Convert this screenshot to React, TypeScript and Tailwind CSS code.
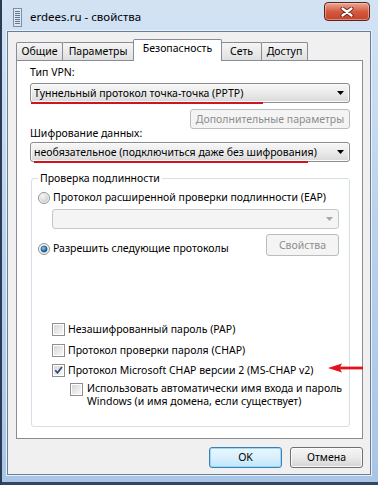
import React from "react";

function DropArrow({ color = "#000" }: { color?: string }) {
  return (
    <svg width="7" height="4" viewBox="0 0 7 4" className="shrink-0">
      <path d="M0 0h7L3.5 4z" fill={color} />
    </svg>
  );
}

function Combo({ text, line }: { text: string; line?: string }) {
  return (
    <div className="relative flex h-[20px] items-center rounded-[3px] border border-[#8a8c90] bg-linear-to-b from-[#f7f7f7] via-[#ebebeb] to-[#d9d9d9] pl-[3px] pr-[5px] shadow-[inset_0_0_0_1px_#fbfbfb]">
      <span className="flex-1 truncate leading-[15px]">{text}</span>
      <DropArrow />
      {line && <div className={`absolute -bottom-[2px] h-[2px] bg-[#d4121c] ${line}`} />}
    </div>
  );
}

function Btn({
  children,
  className,
  disabled,
  primary,
}: {
  children: React.ReactNode;
  className: string;
  disabled?: boolean;
  primary?: boolean;
}) {
  if (disabled) {
    return (
      <div className={`flex items-center justify-center rounded-[3px] border border-[#b9bcc0] bg-[#f4f4f4] leading-[15px] text-[#8d8d8d] ${className}`}>
        {children}
      </div>
    );
  }
  return (
    <div
      className={`flex items-center justify-center rounded-[3px] border bg-linear-to-b leading-[15px] ${
        primary
          ? "border-[#3c7fb1] from-[#eaf6fd] via-[#d9f0fc] to-[#bee6fd] shadow-[inset_0_0_0_1px_#9fd8f7]"
          : "border-[#707070] from-[#f5f5f5] via-[#eaeaea] to-[#d4d4d4] shadow-[inset_0_0_0_1px_#fafafa]"
      } ${className}`}
    >
      {children}
    </div>
  );
}

function Check({ checked }: { checked?: boolean }) {
  return (
    <span className="flex h-[13px] w-[13px] shrink-0 border border-[#8f8f8f] bg-white p-px">
      <span className="flex h-full w-full items-center justify-center bg-linear-to-br from-[#d6d8db] to-[#f8f8f8]">
        {checked && (
          <svg width="9" height="8" viewBox="0 0 9 8">
            <path d="M1.2 4.2l2.3 2.6L7.9 1" stroke="#34497a" strokeWidth="1.7" fill="none" />
          </svg>
        )}
      </span>
    </span>
  );
}

function Radio({ checked }: { checked?: boolean }) {
  return (
    <svg width="12" height="12" viewBox="0 0 12 12" className="shrink-0">
      <defs>
        <radialGradient id="rbg" cx="0.35" cy="0.3" r="0.8">
          <stop offset="0" stopColor="#f6f6f6" />
          <stop offset="1" stopColor="#c9cbcf" />
        </radialGradient>
        <radialGradient id="rdot" cx="0.4" cy="0.35" r="0.7">
          <stop offset="0" stopColor="#8fd3ff" />
          <stop offset="0.6" stopColor="#2a78b8" />
          <stop offset="1" stopColor="#14476f" />
        </radialGradient>
      </defs>
      <circle cx="6" cy="6" r="5.5" fill="#fafafa" stroke="#8e8f8f" />
      <circle cx="6" cy="6" r="4.2" fill="url(#rbg)" />
      {checked && <circle cx="6" cy="6" r="3" fill="url(#rdot)" stroke="#1b4a73" strokeWidth="0.6" />}
    </svg>
  );
}

const tabs = [
  { label: "Общие", w: "w-[47px]" },
  { label: "Параметры", w: "w-[72px]" },
  { label: "Безопасность", w: "w-[89px]", active: true },
  { label: "Сеть", w: "w-[41px]" },
  { label: "Доступ", w: "w-[47px]" },
];

export default function App() {
  return (
    <div className="relative flex h-[485px] w-[378px] flex-col overflow-hidden bg-linear-to-b from-[#d3e3f4] via-[#bad1ec] to-[#a9c5e6] font-['Noto_Sans',sans-serif] text-[10.5px] text-black shadow-[inset_2px_0_0_#2a3b56,inset_0_-3px_0_#34455f]">
      {/* title bar */}
      <div className="flex h-[31px] items-start">
        <svg width="9" height="19" viewBox="0 0 9 19" className="ml-[13px] mt-[8px]">
          <rect x="0.5" y="0.5" width="8" height="18" fill="#dfe6ee" stroke="#7f8ea0" />
          {[3, 5, 7, 9, 11, 13, 15].map((y) => (
            <rect key={y} x="2" y={y} width="5" height="1" fill="#5d7894" />
          ))}
        </svg>
        <span className="ml-[8px] mt-[9px] text-[11.5px] leading-[16px]">erdees.ru - свойства</span>
        <div className="ml-auto mr-[8px] mt-[2px] flex h-[19px] w-[46px] items-center justify-center rounded-[4px] border border-[#5e2419] bg-linear-to-b from-[#e9a796] via-[#d45a40] to-[#c4432a] shadow-[inset_0_0_0_1px_rgba(255,220,210,0.45)]">
          <svg width="14" height="10" viewBox="0 0 14 10">
            <path d="M2.5 1.5l9 7M11.5 1.5l-9 7" stroke="#5a1a10" strokeWidth="4" strokeLinecap="round" />
            <path d="M2.5 1.5l9 7M11.5 1.5l-9 7" stroke="#fff" strokeWidth="2.3" strokeLinecap="round" />
          </svg>
        </div>
      </div>

      {/* body */}
      <div className="ml-[7px] flex h-[444px] w-[364px] flex-col border border-[#6a7e98] bg-[#f0f0f0] pl-[8px] pr-[7px] pt-[7px] shadow-[0_0_0_1px_#e8f0f9]">
        <div className="relative z-10 -mb-px flex h-[22px] items-end">
          {tabs.map((t, i) =>
            t.active ? (
              <div
                key={t.label}
                className={`relative z-10 flex h-[22px] items-center justify-center rounded-t-[2px] border border-b-0 border-[#898c95] bg-white pb-[3px] ${t.w} ${i ? "-ml-px" : ""}`}
              >
                {t.label}
              </div>
            ) : (
              <div
                key={t.label}
                className={`mb-px flex h-[18px] items-center justify-center rounded-t-[2px] border border-b-0 border-[#898c95] bg-linear-to-b from-[#f5f5f5] to-[#e0e0e0] ${t.w} ${i ? "-ml-px" : ""}`}
              >
                {t.label}
              </div>
            )
          )}
        </div>

        <div className="relative flex h-[379px] flex-col border border-[#898c95] bg-white pl-[13px] pr-[12px]">
          <div className="mt-[4px] leading-[15px]">Тип VPN:</div>
          <div className="mt-[3px]">
            <Combo text="Туннельный протокол точка-точка (PPTP)" line="left-0 w-[232px]" />
          </div>
          <Btn disabled className="mt-[6px] h-[20px] w-[160px] self-end">
            Дополнительные параметры
          </Btn>
          <div className="-mt-[3px] leading-[15px]">Шифрование данных:</div>
          <div className="mt-[1px]">
            <Combo text="необязательное (подключиться даже без шифрования)" line="left-[3px] w-[274px]" />
          </div>

          <fieldset className="ml-px mt-[9px] min-w-0 rounded-[3px] border border-[#d5dfe5] pb-[18px] pl-[6px] pr-[10px]">
            <legend className="px-[2px] leading-[15px]">Проверка подлинности</legend>
            <div className="mt-[4px] flex h-[15px] items-center gap-[3px]">
              <Radio />
              <span className="whitespace-nowrap leading-[15px]">Протокол расширенной проверки подлинности (EAP)</span>
            </div>
            <div className="ml-[14px] mt-[4px] flex h-[20px] items-center justify-end rounded-[3px] border border-[#c3c6ca] bg-[#f4f4f4] pr-[5px]">
              <DropArrow color="#a8a8a8" />
            </div>
            <div className="mt-[5px] flex items-start">
              <div className="mt-[7px] flex h-[15px] items-center gap-[3px]">
                <Radio checked />
                <span className="leading-[15px]">Разрешить следующие протоколы</span>
              </div>
              <Btn disabled className="ml-auto h-[22px] w-[73px]">
                Свойства
              </Btn>
            </div>

            <div className="ml-[14px] mt-[63px] flex h-[20px] items-center gap-[3px]">
              <Check />
              <span className="leading-[15px]">Незашифрованный пароль (PAP)</span>
            </div>
            <div className="ml-[14px] mt-px flex h-[20px] items-center gap-[3px]">
              <Check />
              <span className="leading-[15px]">Протокол проверки пароля (CHAP)</span>
            </div>
            <div className="ml-[14px] flex h-[20px] items-center gap-[3px]">
              <Check checked />
              <span className="whitespace-nowrap leading-[15px]">Протокол Microsoft CHAP версии 2 (MS-CHAP v2)</span>
            </div>
            <div className="ml-[32px] mt-[2px] flex items-start gap-[4px]">
              <div className="mt-px">
                <Check />
              </div>
              <span className="whitespace-nowrap leading-[13px]">
                Использовать автоматически имя входа и пароль
                <br />
                Windows (и имя домена, если существует)
              </span>
            </div>
          </fieldset>

          <svg width="35" height="10" viewBox="0 0 35 10" className="absolute left-[311px] top-[302px]">
            <path d="M0 5L14 0.5L11.5 5L14 9.5z" fill="#e3121c" />
            <rect x="11" y="3.6" width="24" height="2.8" fill="#e3121c" />
          </svg>
        </div>

        <div className="mt-[8px] flex justify-end gap-[8px]">
          <Btn primary className="h-[21px] w-[73px]">
            OK
          </Btn>
          <Btn className="h-[21px] w-[73px]">Отмена</Btn>
        </div>
      </div>
    </div>
  );
}
